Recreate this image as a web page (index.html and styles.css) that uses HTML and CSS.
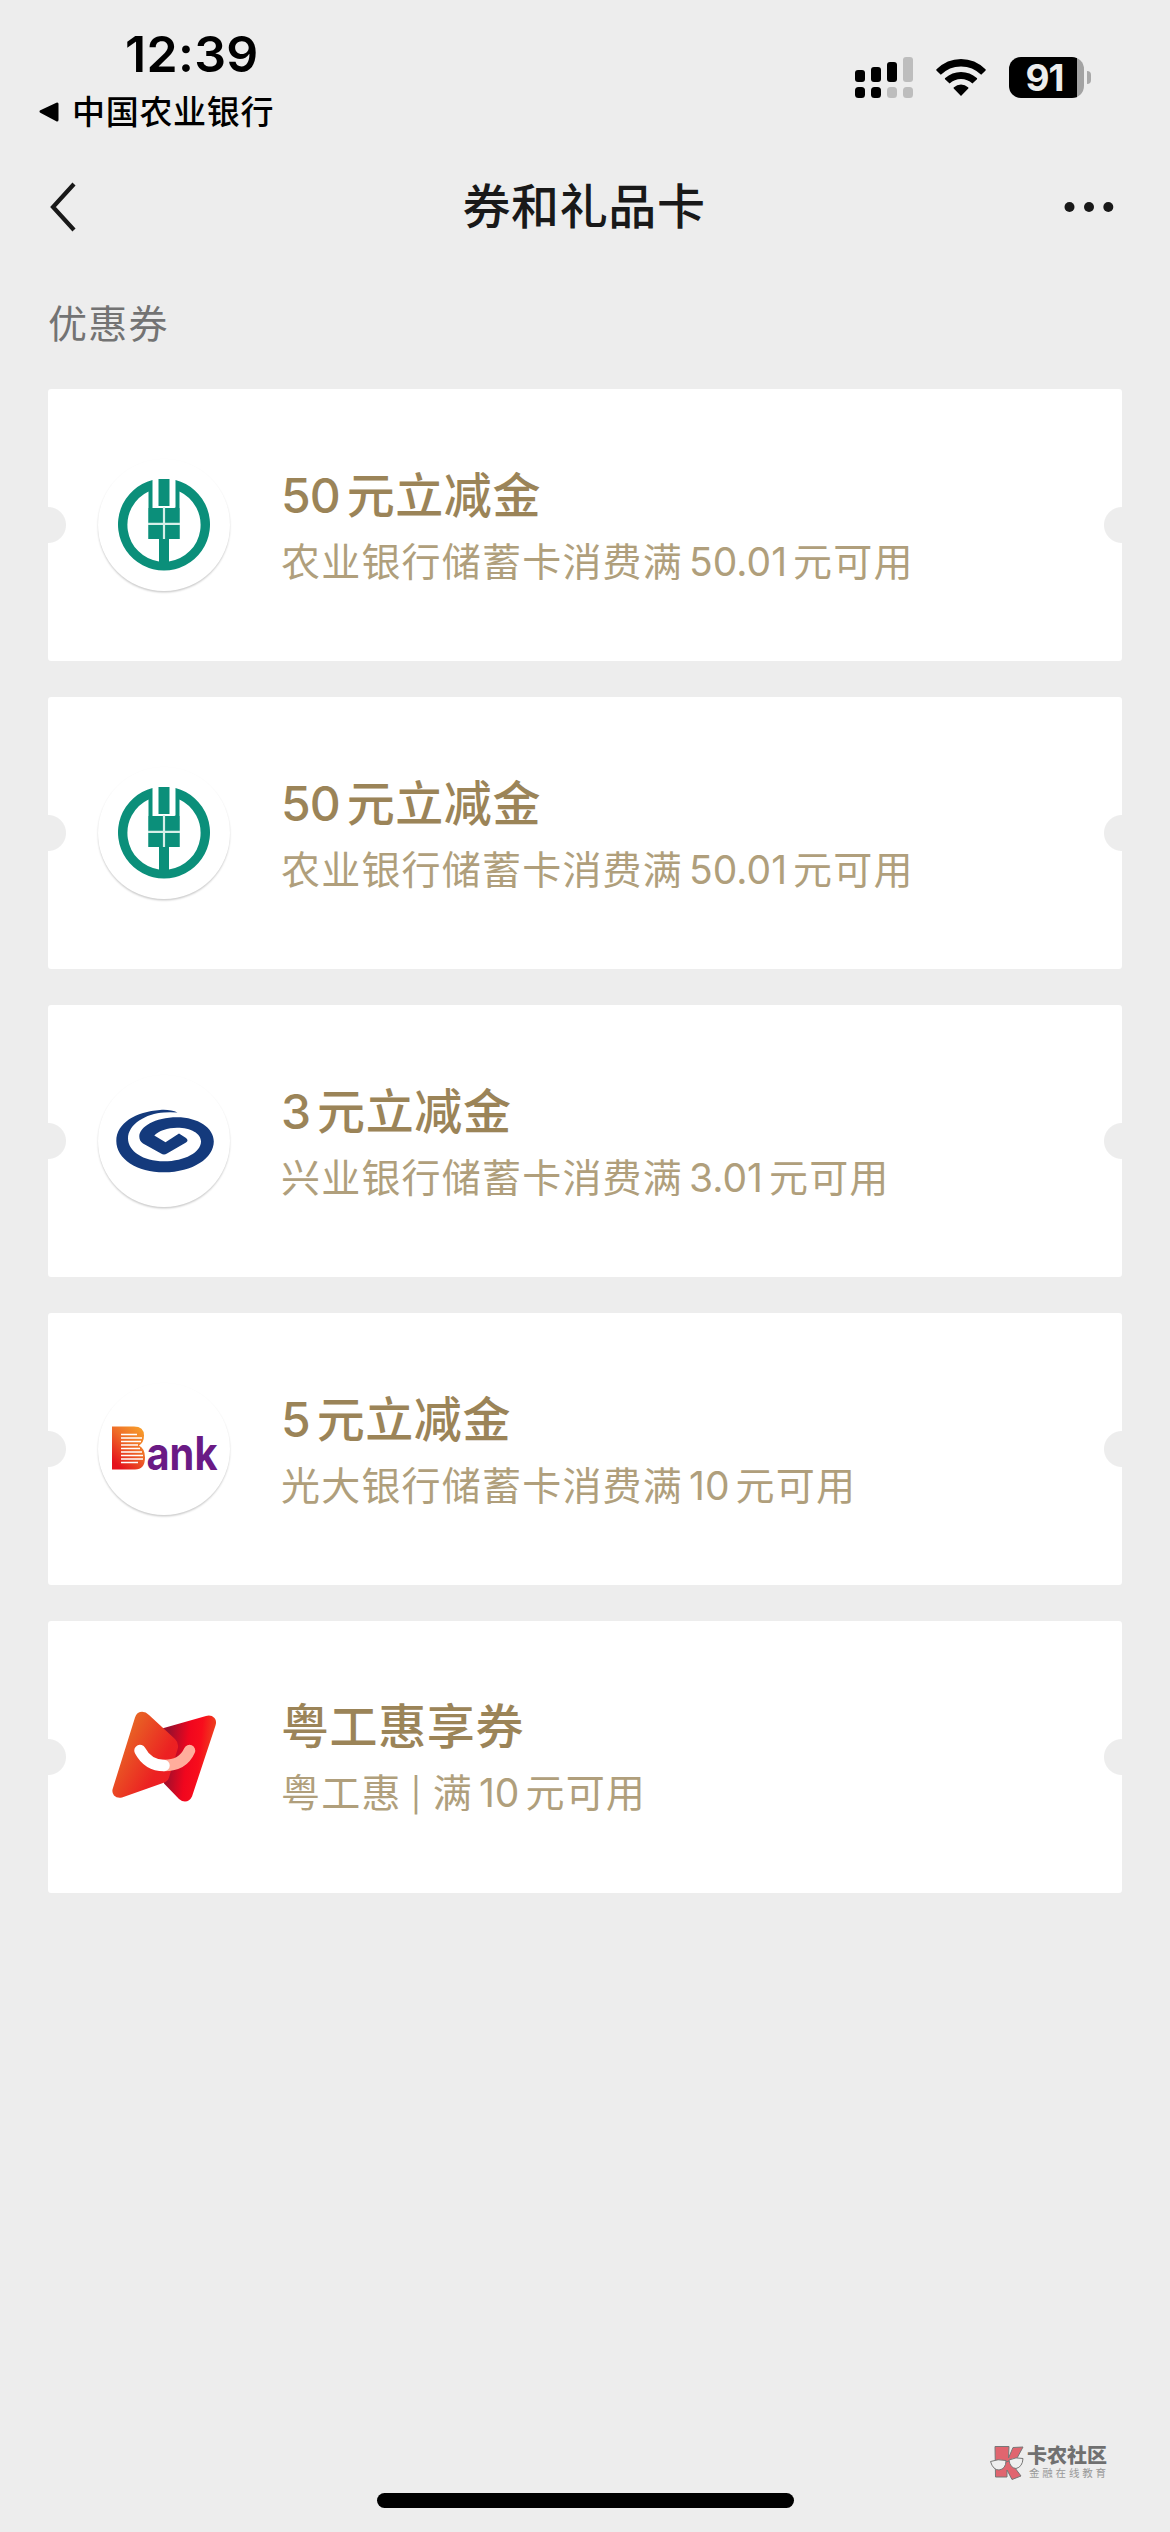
FILE: index.html
```html
<!DOCTYPE html>
<html lang="zh-CN">
<head>
<meta charset="utf-8">
<title>券和礼品卡</title>
<link rel="stylesheet" href="styles.css">
</head>
<body>
<div class="screen">
  <header class="status">
    <div class="status-left">
      <div class="clock">12:39</div>
      <div class="return-app">
        <svg class="return-arrow" viewBox="0 0 22 22"><path d="M3 10.5 19 3v16z" stroke="#000" stroke-width="3" stroke-linejoin="round"/></svg>
        <span>中国农业银行</span>
      </div>
    </div>
    <div class="status-right">
      <svg class="signal" viewBox="0 0 58 41">
        <rect x="0" y="13" width="10" height="12" rx="3"/><rect x="16" y="10" width="10" height="15" rx="3"/><rect x="32" y="5" width="10" height="20" rx="3"/><rect class="dim" x="48" y="0" width="10" height="25" rx="3"/>
        <rect x="0" y="30" width="10" height="11" rx="3.5"/><rect x="16" y="30" width="10" height="11" rx="3.5"/><rect class="dim" x="32" y="30" width="10" height="11" rx="3.5"/><rect class="dim" x="48" y="30" width="10" height="11" rx="3.5"/>
      </svg>
      <svg class="wifi" viewBox="0 0 50 37">
        <path d="M25 37 17.7 29.5Q17.2 28.8 18 28.2 21 25.6 25 25.6T32 28.2Q32.8 28.8 32.3 29.5Z"/>
        <path d="M13.6 24.6 9 20.2Q8.6 19.6 9.2 19 16 13 25 13T40.800 19Q41.400 19.600 41 20.200L36.400 24.600Q31.500 20.100 25 20.100T13.600 24.600Z"/>
        <path d="M4.800 15.800.4 11.400Q0 10.900.5 10.300 11 0 25 0T49.500 10.300Q50 10.900 49.600 11.400L45.200 15.800Q36.800 7.400 25 7.400T4.800 15.800Z"/>
      </svg>
      <div class="battery">
        <div class="battery-body">91</div>
        <div class="battery-cap"></div>
      </div>
    </div>
  </header>

  <nav class="navbar">
    <svg class="back" viewBox="0 0 28 50"><path d="M25 2 4 25l21 23" fill="none" stroke="#191919" stroke-width="4.200"/></svg>
    <h1 class="nav-title">券和礼品卡</h1>
    <svg class="more" viewBox="0 0 50 12"><circle cx="5.500" cy="6" r="5"/><circle cx="25" cy="6" r="5"/><circle cx="44.300" cy="6" r="5"/></svg>
  </nav>

  <main class="content">
    <h2 class="section-title">优惠券</h2>
    <ul class="coupons">
      <li class="coupon">
        <div class="logo ring">
          <svg viewBox="0 0 132 132"><use href="#abc"/></svg>
        </div>
        <div class="info">
          <div class="name"><span class="num">50</span>元立减金</div>
          <div class="desc">农业银行储蓄卡消费满<span class="num mid">50.01</span>元可用</div>
        </div>
      </li>
      <li class="coupon">
        <div class="logo ring">
          <svg viewBox="0 0 132 132"><use href="#abc"/></svg>
        </div>
        <div class="info">
          <div class="name"><span class="num">50</span>元立减金</div>
          <div class="desc">农业银行储蓄卡消费满<span class="num mid">50.01</span>元可用</div>
        </div>
      </li>
      <li class="coupon">
        <div class="logo ring">
          <svg viewBox="0 1 132 132">
            <path fill="#143a7c" d="M79.500 38.500C75 36.200 68 35.500 62 36 38 37.500 18.300 49 18.300 67 18.300 85 39 98.300 66 98.300 95 98.300 115.800 84 115.800 67.500 115.800 54 100 43.300 79 43.300 57 43.300 41.300 53 41.300 62.500 41.300 65.500 42.500 67.800 45 69.500L63 79.500Q66 81.500 69 79.500L88 68.500Q91 66.500 88 64L81 59.500 67.500 68.300 56.300 61.500C60 57 70 53.700 79 53.700 93 53.700 103 59.500 103 67.500 103 78 87 87.300 66 87.300 45 87.300 30 77 30 64.500 30 50 48 39.500 66 38.400Q73 38 79.500 38.500Z"/>
          </svg>
        </div>
        <div class="info">
          <div class="name"><span class="num">3</span>元立减金</div>
          <div class="desc">兴业银行储蓄卡消费满<span class="num mid">3.01</span>元可用</div>
        </div>
      </li>
      <li class="coupon">
        <div class="logo ring">
          <svg viewBox="0 1.500 132 132">
            <defs><linearGradient id="warm" x1="1" y1="0" x2=".3" y2="1"><stop offset="0" stop-color="#f9a72c"/><stop offset=".5" stop-color="#ee6a28"/><stop offset="1" stop-color="#e5111c"/></linearGradient></defs>
            <path fill="url(#warm)" d="M14 45H36Q46 45 46 54 46 61 41 64 47 67 47 76 47 88 37 88H14Z"/>
            <g stroke="#fff" stroke-width="1.300"><path d="M23 53H39M23 56.500H44M23 60H43M23 63.500H40M23 67H42M23 70.500H44M23 74H45M23 77.500H45M23 81H40"/></g>
            <text class="bank-word" x="48.500" y="88" textLength="71" lengthAdjust="spacingAndGlyphs">ank</text>
          </svg>
        </div>
        <div class="info">
          <div class="name"><span class="num">5</span>元立减金</div>
          <div class="desc">光大银行储蓄卡消费满<span class="num mid">10</span>元可用</div>
        </div>
      </li>
      <li class="coupon">
        <div class="logo">
          <svg viewBox="0 11.500 132 132">
            <defs>
              <linearGradient id="left" x1=".1" y1=".2" x2=".9" y2=".8"><stop offset="0" stop-color="#e76f25"/><stop offset=".75" stop-color="#ec2122"/><stop offset="1" stop-color="#ed1c24"/></linearGradient>
              <linearGradient id="right" x1=".1" y1=".4" x2="1" y2=".55"><stop offset="0" stop-color="#9c0f2c"/><stop offset=".4" stop-color="#f0061e"/><stop offset=".65" stop-color="#f80d1c"/><stop offset="1" stop-color="#ea5020"/></linearGradient>
            </defs>
            <path fill="url(#right)" d="M64 49 108 36.500Q113 35 116.500 38.500 119 41.500 117.500 46L94 117Q91.500 122 87 122 84 122 81 119.500L66 104Z"/>
            <path fill="url(#left)" d="M37 38Q38.500 33.500 42 32.600 47 31.500 51 35.500L77 59.500Q81.500 64 79.500 70L71 98Q70 102 65 103.500L24 118Q19 119 16 116 13.500 113 14.800 109Z"/>
            <path d="M66 86Q85 86 91.500 71" fill="none" stroke="#ffad9c" stroke-width="11.500" stroke-linecap="round"/>
            <path d="M42 71Q50 86 66 86" fill="none" stroke="#fff" stroke-width="11.500" stroke-linecap="round"/>
          </svg>
        </div>
        <div class="info">
          <div class="name">粤工惠享券</div>
          <div class="desc">粤工惠<span class="bar">|</span>满<span class="num mid">10</span>元可用</div>
        </div>
      </li>
    </ul>
  </main>

  <footer class="footer">
    <div class="watermark">
      <svg class="mark-logo" viewBox="0 0 34 36">
        <path d="M5 1.500H19L18.500 13 23 2.500 33 2 26 15 22 19 31 31 22 34.500 17 25V32H5.500Z" fill="#e0656f" stroke="#777" stroke-width="1"/>
        <path d="M.5 16.500Q8 13.500 16 15.500 16 24 9 25 3 25 .5 16.500ZM19 15Q26 11.500 33 13.500 32.500 22 26 23.500 20 23 19 15ZM16 17 19 16" fill="#eee" stroke="#777" stroke-width="1"/>
      </svg>
      <div class="mark-text">
        <div class="mark-name">卡农社区</div>
        <div class="mark-tag">金融在线教育</div>
      </div>
    </div>
    <div class="home-bar"></div>
  </footer>
</div>

<svg class="symbols" aria-hidden="true">
  <symbol id="abc" viewBox="0 0 132 132">
    <path fill="#0b8f7a" d="M54.500 21A46 46 0 1 0 77.500 21V50H69.500V48.500H77.500V50H74V48.500H58V50H54.500Z M61 102.500A37 37 0 0 1 50.500 32.500V80H61ZM71 102.500V80H81.500V32.500A37 37 0 0 1 71 102.500Z" fill-rule="evenodd"/>
    <path fill="#fff" d="M55.500 18H76.800V50H55.500Z"/>
    <path fill="#0b8f7a" d="M60.500 20H71.500V47H60.500ZM50.500 49H81.500V80H50.500Z"/>
    <path d="M66 48V80M50 64.800H82" stroke="#d6efe9" stroke-width="2.200"/>
  </symbol>
</svg>
</body>
</html>
```
FILE: styles.css
```css
* { box-sizing: border-box; }
body {
  margin: 0;
  background: #ededed;
  font-family: Inter, "Noto Sans CJK SC", sans-serif;
  color: #191919;
}
h1, h2, ul { margin: 0; padding: 0; font-weight: 400; list-style: none; }
svg { display: block; }
.symbols { position: absolute; width: 0; height: 0; }

.screen {
  width: 1170px;
  height: 2532px;
  display: flex;
  flex-direction: column;
  overflow: hidden;
}

/* Status bar */
.status {
  height: 141px;
  padding: 0 79px 0 38px;
  display: flex;
  justify-content: space-between;
  color: #000;
}
.status-left { padding-top: 24px; }
.clock {
  width: 136px;
  margin-left: 87px;
  line-height: 60px;
  font-size: 50px;
  font-weight: 600;
  letter-spacing: .3px;
  white-space: nowrap;
}
.return-app {
  display: flex;
  align-items: center;
  gap: 12px;
  margin-top: 8px;
  height: 40px;
  font-size: 33px;
  line-height: 40px;
  font-weight: 500;
  letter-spacing: .7px;
}
.return-arrow { width: 22px; height: 22px; }
.status-right { display: flex; align-items: flex-start; padding-top: 57px; }
.signal { width: 58px; height: 41px; }
.dim { fill: #bdbdbd; }
.wifi { width: 50px; height: 37px; margin: 2px 23px 0; }
.battery { display: flex; align-items: center; gap: 3px; }
.battery-body {
  width: 75px;
  height: 41px;
  padding-right: 4px;
  border-radius: 12px;
  background: linear-gradient(90deg, #000 68px, #a3a3a3 68px);
  color: #ededed;
  font-size: 37px;
  font-weight: 700;
  line-height: 41px;
  text-align: center;
  letter-spacing: -1px;
}
.battery-cap { width: 4px; height: 13px; border-radius: 0 6px 6px 0; background: #a9a9a9; }

/* Navigation */
.navbar {
  height: 132px;
  padding: 0 56px 0 49px;
  display: grid;
  grid-template-columns: 50px 1fr 50px;
  align-items: center;
}
.back { width: 28px; height: 50px; }
.more { width: 50px; height: 12px; fill: #191919; }
.nav-title {
  padding-left: 5px;
  text-align: center;
  font-size: 48px;
  font-weight: 500;
  line-height: 60px;
  letter-spacing: .6px;
}

/* Coupons */
.content { padding: 0 48px; flex: 1; }
.section-title {
  height: 116px;
  line-height: 60px;
  padding-top: 21px;
  font-size: 39px;
  letter-spacing: 1.200px;
  color: #737373;
}
.coupons { display: grid; gap: 36px; }
.coupon {
  height: 272px;
  padding-left: 50px;
  display: flex;
  align-items: center;
  gap: 51px;
  border-radius: 3px;
  background:
    radial-gradient(circle at 0 50%, #ededed 17.500px, transparent 18.500px),
    radial-gradient(circle at 100% 50%, #ededed 17.500px, transparent 18.500px),
    #fff;
}
.logo { width: 132px; height: 132px; border-radius: 50%; }
.ring { box-shadow: 0 1.500px 2px rgba(0, 0, 0, .2); }
.logo svg { width: 132px; height: 132px; overflow: visible; }
.bank-word { font: 700 46px Inter, sans-serif; fill: #6a1a85; }
.info { white-space: nowrap; padding-top: 7px; }
.name {
  font-size: 48px;
  line-height: 66px;
  font-weight: 500;
  letter-spacing: .6px;
  color: #9b8458;
}
.name .num { letter-spacing: -1px; margin-right: 7px; }
.desc {
  font-size: 39px;
  line-height: 66px;
  letter-spacing: 1.200px;
  color: #b09f7c;
}
.desc .mid { margin: 0 6px; letter-spacing: 0; }
.desc .bar { margin: 0 10px 0 9px; font-size: 33px; }

/* Footer */
.footer { height: 100px; display: flex; flex-direction: column; }
.watermark { display: flex; gap: 3px; margin-left: 990px; padding-top: 13px; }
.mark-logo { width: 34px; height: 36px; }
.mark-text { color: #707070; white-space: nowrap; }
.mark-name { font-size: 20px; line-height: 22px; font-weight: 900; }
.mark-tag { padding-left: 2px; font-size: 10.500px; line-height: 13px; letter-spacing: 2.800px; color: #999; }
.home-bar {
  width: 417px;
  height: 15px;
  margin: 12px auto 0;
  border-radius: 8px;
  background: #000;
}
```
